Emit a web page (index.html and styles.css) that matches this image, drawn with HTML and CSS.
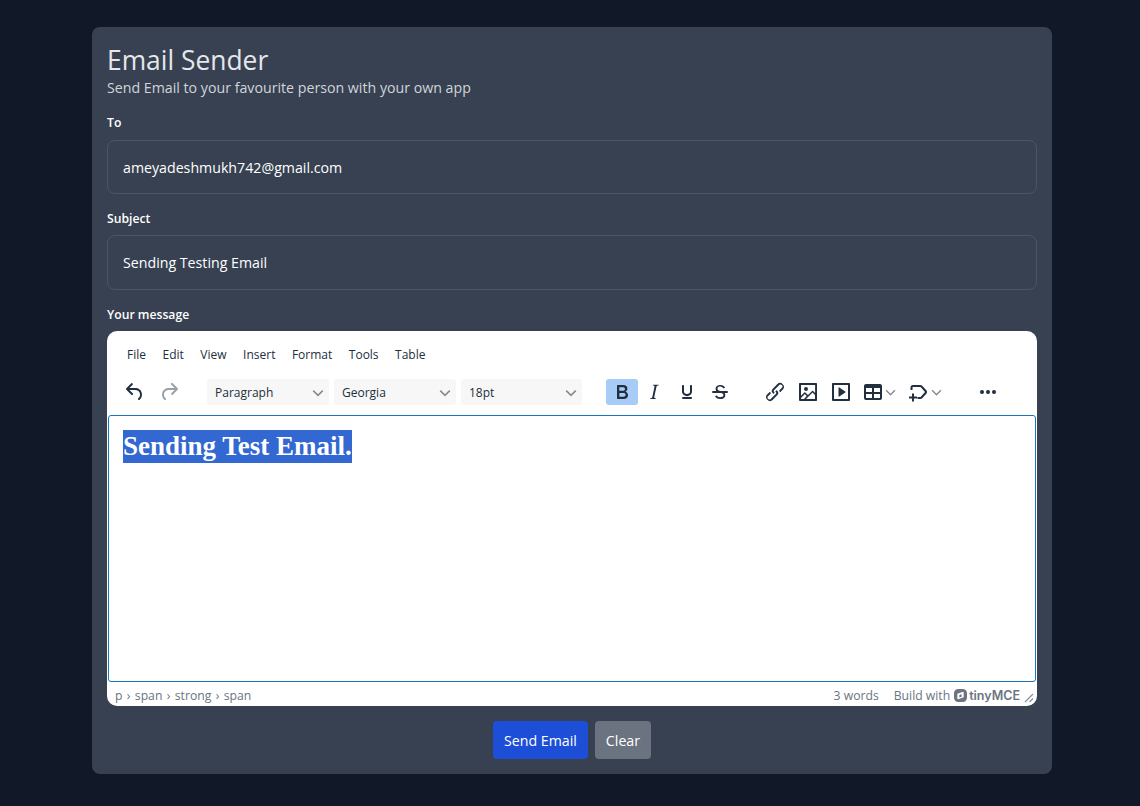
FILE: index.html
```html
<!DOCTYPE html>
<html lang="en">

<head>
    <meta charset="UTF-8">
    <meta name="viewport" content="width=device-width, initial-scale=1.0">
    <title>Email Sender</title>
    <link rel="stylesheet" href="styles.css">
</head>

<body>
    <form class="card">
        <h1>Email Sender</h1>
        <p class="subtitle">Send Email to your favourite person with your own app</p>

        <label class="field-label" for="to">To</label>
        <input class="text-input" id="to" type="text" value="ameyadeshmukh742@gmail.com">

        <label class="field-label" for="subject">Subject</label>
        <input class="text-input" id="subject" type="text" value="Sending Testing Email">

        <label class="field-label">Your message</label>
        <div class="editor">
            <div class="menubar">
                <span>File</span>
                <span>Edit</span>
                <span>View</span>
                <span>Insert</span>
                <span>Format</span>
                <span>Tools</span>
                <span>Table</span>
            </div>

            <div class="toolbar">
                <div class="tool-group history">
                    <button class="tool" type="button">
                        <svg viewBox="0 0 24 24"><path d="M6.4 8H12c3.7 0 6.2 2 6.8 5.1.6 2.7-.4 5.6-2.3 6.8a1 1 0 0 1-1-1.8c1.1-.6 1.8-2.7 1.4-4.6-.5-2.1-2.1-3.5-4.9-3.5H6.4l3.3 3.3a1 1 0 1 1-1.4 1.4l-5-5a1 1 0 0 1 0-1.4l5-5a1 1 0 0 1 1.4 1.4L6.4 8Z"/></svg>
                    </button>
                    <button class="tool disabled" type="button">
                        <svg viewBox="0 0 24 24"><path d="M17.6 10H12c-2.8 0-4.4 1.4-4.9 3.5-.4 2 .3 4 1.4 4.6a1 1 0 1 1-1 1.8c-2-1.2-2.9-4.1-2.3-6.8.6-3 3-5.1 6.8-5.1h5.6l-3.3-3.3a1 1 0 1 1 1.4-1.4l5 5a1 1 0 0 1 0 1.4l-5 5a1 1 0 0 1-1.4-1.4l3.3-3.3Z"/></svg>
                    </button>
                </div>

                <div class="tool-group selects">
                    <button class="select" type="button">Paragraph
                        <svg class="chevron" viewBox="0 0 10 10"><path d="M1 3l4 4 4-4"/></svg>
                    </button>
                    <button class="select" type="button">Georgia
                        <svg class="chevron" viewBox="0 0 10 10"><path d="M1 3l4 4 4-4"/></svg>
                    </button>
                    <button class="select" type="button">18pt
                        <svg class="chevron" viewBox="0 0 10 10"><path d="M1 3l4 4 4-4"/></svg>
                    </button>
                </div>

                <div class="tool-group format">
                    <button class="tool wide active" type="button">
                        <svg viewBox="0 0 24 24"><path d="M7.8 19c-.3 0-.5 0-.6-.2l-.2-.5V5.7c0-.2 0-.4.2-.5l.6-.2h5c1.5 0 2.7.3 3.5 1 .7.6 1.1 1.4 1.1 2.5a3 3 0 0 1-.6 1.9c-.4.6-1 1-1.6 1.2.4.1.9.3 1.3.6s.8.7 1 1.2c.4.4.5 1 .5 1.6 0 1.3-.4 2.3-1.3 3-.8.7-2.1 1-3.8 1H7.8Zm5-8.3c.6 0 1.2-.1 1.6-.5.4-.3.6-.7.6-1.3 0-1.1-.8-1.7-2.3-1.7H9.3v3.5h3.4Zm.5 6c.7 0 1.3-.1 1.7-.4.4-.4.6-.9.6-1.500s-.2-1-.7-1.400c-.4-.3-1-.4-2-.4H9.4v3.800h4Z"/></svg>
                    </button>
                    <button class="tool" type="button">
                        <svg viewBox="0 0 24 24"><path d="M16.7 4.700l-.1.9h-.3c-.6 0-1 0-1.400.3-.3.3-.4.6-.5 1.100l-2.100 9.800v.6c0 .5.4.8 1.400.8h.2l-.2.8H8l.2-.8h.2c1.100 0 1.800-.5 2-1.500l2-9.800.1-.5c0-.6-.4-.8-1.400-.8h-.3l.2-.9h5.800Z"/></svg>
                    </button>
                    <button class="tool" type="button">
                        <svg viewBox="0 0 24 24"><path d="M16 5c.6 0 1 .4 1 1v5.500a4 4 0 0 1-.4 1.800l-1 1.400a5.300 5.300 0 0 1-5.500 1 5 5 0 0 1-1.600-1c-.5-.4-.8-.9-1.100-1.400a4 4 0 0 1-.4-1.800V6c0-.6.4-1 1-1s1 .4 1 1v5.500c0 .3 0 .6.2 1l.6.7a3.300 3.300 0 0 0 2.200.8 3.400 3.400 0 0 0 2.200-.8c.3-.2.4-.5.6-.8l.2-.9V6c0-.6.4-1 1-1ZM8 17h8c.6 0 1 .4 1 1s-.4 1-1 1H8a1 1 0 0 1 0-2Z"/></svg>
                    </button>
                    <button class="tool" type="button">
                        <svg viewBox="0 0 24 24"><path d="M15.600 8.500c-.5-.7-1-1.100-1.300-1.300-.6-.4-1.300-.6-2-.6-2.700 0-2.800 1.700-2.800 2.100 0 1.600 1.800 2 3.200 2.300 4.400.9 4.600 2.800 4.600 3.900 0 1.400-.7 4.100-5 4.100A6.200 6.200 0 0 1 7 16.400l1.500-1.100c.4.6 1.600 2 3.700 2 1.600 0 2.500-.4 3-1.200.4-.8.3-2-.8-2.600-.7-.4-1.600-.7-2.900-1-1-.2-3.900-.8-3.900-3.600C7.600 6 10.300 5 12.400 5c2.900 0 4.200 1.600 4.700 2.400l-1.500 1.100Z"/><path d="M5 11h14a1 1 0 0 1 0 2H5a1 1 0 0 1 0-2Z"/></svg>
                    </button>
                </div>

                <div class="tool-group insert">
                    <button class="tool" type="button">
                        <svg viewBox="0 0 24 24"><path d="M6.200 12.300a1 1 0 0 1 1.400 1.400l-2 2a2 2 0 1 0 2.600 2.800l4.800-4.800a1 1 0 0 0 0-1.400 1 1 0 1 1 1.400-1.300 2.900 2.900 0 0 1 0 4L9.600 20a3.900 3.900 0 0 1-5.500-5.500l2-2Zm11.600-.6a1 1 0 0 1-1.400-1.400l2-2a2 2 0 1 0-2.600-2.800L11 10.300a1 1 0 0 0 0 1.400A1 1 0 1 1 9.600 13a2.900 2.900 0 0 1 0-4L14.400 4a3.900 3.900 0 0 1 5.500 5.500l-2 2Z"/></svg>
                    </button>
                    <button class="tool" type="button">
                        <svg viewBox="0 0 24 24"><path d="M5 15.700l3.300-3.200c.3-.3.7-.3 1 0L12 15l4.100-4c.3-.4.8-.4 1 0l2 1.900V5H5v10.700ZM5 18V19h3l2.800-2.900-2-2L5 17.900Zm14-3l-2.500-2.400-6.400 6.500H19v-4ZM4 3h16c.6 0 1 .4 1 1v16c0 .6-.4 1-1 1H4a1 1 0 0 1-1-1V4c0-.6.4-1 1-1Zm6 8a2 2 0 1 1 0-4 2 2 0 0 1 0 4Z"/></svg>
                    </button>
                    <button class="tool" type="button">
                        <svg viewBox="0 0 24 24"><path fill-rule="evenodd" d="M4 3h16c.6 0 1 .4 1 1v16c0 .6-.4 1-1 1H4a1 1 0 0 1-1-1V4c0-.6.4-1 1-1Zm1 2v14h14V5H5Z"/><path d="M9.500 7.800v8.400c0 .4.5.7.8.4l6-4.200c.3-.2.3-.6 0-.8l-6-4.200c-.3-.3-.8 0-.8.4Z"/></svg>
                    </button>
                    <button class="tool split" type="button">
                        <svg viewBox="0 0 24 24"><path fill-rule="evenodd" d="M19 4a2 2 0 0 1 2 2v12a2 2 0 0 1-2 2H5a2 2 0 0 1-2-2V6c0-1.100.9-2 2-2h14Zm0 10h-6v4h6v-4Zm-8 0H5v4h6v-4Zm8-6h-6v4h6V8Zm-8 0H5v4h6V8Z"/></svg>
                        <svg class="chevron" viewBox="0 0 10 10"><path d="M1 3l4 4 4-4"/></svg>
                    </button>
                    <button class="tool split comment" type="button">
                        <svg class="stroked" viewBox="0 0 24 24"><path d="M5.500 10V7.500c0-.8.7-1.500 1.500-1.500h7.300c.5 0 .9.200 1.200.500l4.300 4.700c.4.500.4 1.100 0 1.600L15.500 17.500c-.3.300-.7.500-1.200.5H11.500"/><path d="M7 13.500v8M3 17.500h8"/></svg>
                        <svg class="chevron" viewBox="0 0 10 10"><path d="M1 3l4 4 4-4"/></svg>
                    </button>
                </div>

                <button class="tool more" type="button">
                    <svg viewBox="0 0 24 24"><circle cx="6" cy="12" r="2"/><circle cx="12" cy="12" r="2"/><circle cx="18" cy="12" r="2"/></svg>
                </button>
            </div>

            <div class="edit-area">
                <p><strong class="selected">Sending Test Email.</strong></p>
            </div>

            <div class="statusbar">
                <span class="path">p › span › strong › span</span>
                <span class="word-count">3 words</span>
                <span class="brand">Build with
                    <svg viewBox="0 0 14 14"><path fill-rule="evenodd" d="M4.500 0h5A4.500 4.500 0 0 1 14 4.500v5A4.500 4.500 0 0 1 9.500 14h-5A4.500 4.500 0 0 1 0 9.500v-5A4.500 4.500 0 0 1 4.500 0Zm5.300 3L3.600 5v5.500l1 .5 5.800-2V3.500L9.800 3ZM5.800 6.500l2.400-.8v2.600l-2.400.8V6.500Z"/></svg>
                    <b>tinyMCE</b>
                </span>
                <svg class="resize" viewBox="0 0 10 10"><path d="M9 1L1 9M9 5.500L5.500 9"/></svg>
            </div>
        </div>

        <div class="actions">
            <button class="btn btn-send" type="button">Send Email</button>
            <button class="btn btn-clear" type="button">Clear</button>
        </div>
    </form>
</body>

</html>
```

FILE: styles.css
```css
* {
    box-sizing: border-box;
}

body {
    margin: 0;
    min-height: 806px;
    background-color: #111827;
    font-family: 'Open Sans', 'Noto Sans', sans-serif;
    overflow: hidden;
}

button {
    font-family: inherit;
    border: 0;
    padding: 0;
}

.card {
    width: 960px;
    height: 747px;
    margin: 27px 0 0 92px;
    padding: 15px;
    background-color: #374151;
    border-radius: 8px;
}

h1 {
    margin: 0;
    color: #e5e7eb;
    font-size: 26.4px;
    font-weight: 400;
    line-height: 36px;
}

.subtitle {
    margin: 0;
    color: #d1d5db;
    font-size: 14.2px;
    line-height: 20px;
}

.field-label {
    display: block;
    height: 20px;
    margin-top: 15px;
    color: #fff;
    font-size: 12.2px;
    font-weight: 600;
    line-height: 20px;
}

.text-input {
    display: block;
    width: 100%;
    height: 54px;
    margin-top: 6px;
    padding: 0 15px;
    background-color: #374151;
    border: 1px solid #4b5563;
    border-radius: 8px;
    color: #fff;
    font-family: inherit;
    font-size: 14.2px;
}

#to {
    margin-top: 7px;
}

#subject {
    height: 55px;
}

/* editor */
.editor {
    display: flex;
    flex-direction: column;
    height: 375px;
    margin-top: 6px;
    background-color: #fff;
    border-radius: 10px;
    overflow: hidden;
}

.menubar {
    display: flex;
    gap: 16.5px;
    height: 46px;
    padding: 1px 0 0 20px;
    color: #222f3e;
    font-size: 12px;
    line-height: 46px;
}

.toolbar {
    display: flex;
    height: 38px;
    padding-top: 2px;
}

.tool-group {
    display: flex;
    gap: 1px;
}

.tool {
    display: flex;
    align-items: center;
    justify-content: center;
    flex-shrink: 0;
    width: 32px;
    height: 26px;
    background: none;
    border-radius: 3px;
}

.tool svg {
    width: 24px;
    height: 24px;
    flex-shrink: 0;
    fill: #222f3e;
}

.tool.disabled svg {
    fill: #9aa1a9;
}

.tool.active {
    background-color: #a6ccf7;
    margin-right: -1px;
}

.history {
    margin-left: 12px;
    gap: 2px;
}

.selects {
    margin-left: 22px;
    gap: 5px;
}

.select {
    display: flex;
    align-items: center;
    justify-content: space-between;
    width: 122px;
    height: 26px;
    padding: 1px 5px 0 8px;
    background-color: #f7f7f7;
    border-radius: 3px;
    color: #222f3e;
    font-size: 12px;
}

.select:last-child {
    width: 121px;
}

.chevron {
    fill: none;
    stroke: #858b94;
    stroke-width: 1.300;
}

.select .chevron {
    width: 12px;
    height: 12px;
}

.format {
    margin-left: 24px;
}

.insert {
    margin-left: 23px;
}

.tool.split {
    justify-content: flex-start;
    width: 42px;
    padding-left: 3px;
}

.tool.split.comment {
    padding-left: 5px;
}

.tool.comment .chevron {
    margin-left: 1px;
}

.tool .chevron {
    width: 11px;
    height: 11px;
    fill: none;
}

.tool .stroked {
    fill: none;
    stroke: #222f3e;
    stroke-width: 2;
}

.tool.more {
    margin-left: 29px;
}

.edit-area {
    height: 267px;
    margin: 0 1px;
    padding: 14px 14px 0;
    border: 1px solid #1976c0;
    border-radius: 3px;
}

.edit-area p {
    margin: 0;
    font-family: 'Liberation Serif', serif;
    font-size: 27px;
    line-height: 33px;
}

.selected {
    display: inline-block;
    background-color: #3367d1;
    color: #fff;
}

.statusbar {
    display: flex;
    align-items: flex-start;
    height: 24px;
    padding: 5px 3px 0 8px;
    color: #6b7480;
    font-size: 12.2px;
    line-height: 17px;
}

.path {
    flex: 1;
    word-spacing: 1.2px;
}

.word-count {
    margin-right: 15px;
}

.brand {
    display: flex;
    align-items: center;
    gap: 4px;
}

.brand svg {
    width: 13px;
    height: 13px;
    fill: #6b7480;
}

.brand b {
    margin-left: -2px;
    font-family: 'Inter', sans-serif;
    font-size: 12.5px;
    font-weight: 600;
}

.resize {
    width: 10px;
    height: 10px;
    margin: 6px 0 0 4px;
    fill: none;
    stroke: #8b929b;
    stroke-width: 1.200;
}

/* buttons */
.actions {
    display: flex;
    justify-content: center;
    gap: 7px;
    margin-top: 15px;
}

.btn {
    height: 38px;
    padding: 1px 11px 0;
    border-radius: 4px;
    color: #fff;
    font-size: 14.2px;
}

.btn-send {
    background-color: #1d4ed8;
}

.btn-clear {
    background-color: #6b7280;
}
```
